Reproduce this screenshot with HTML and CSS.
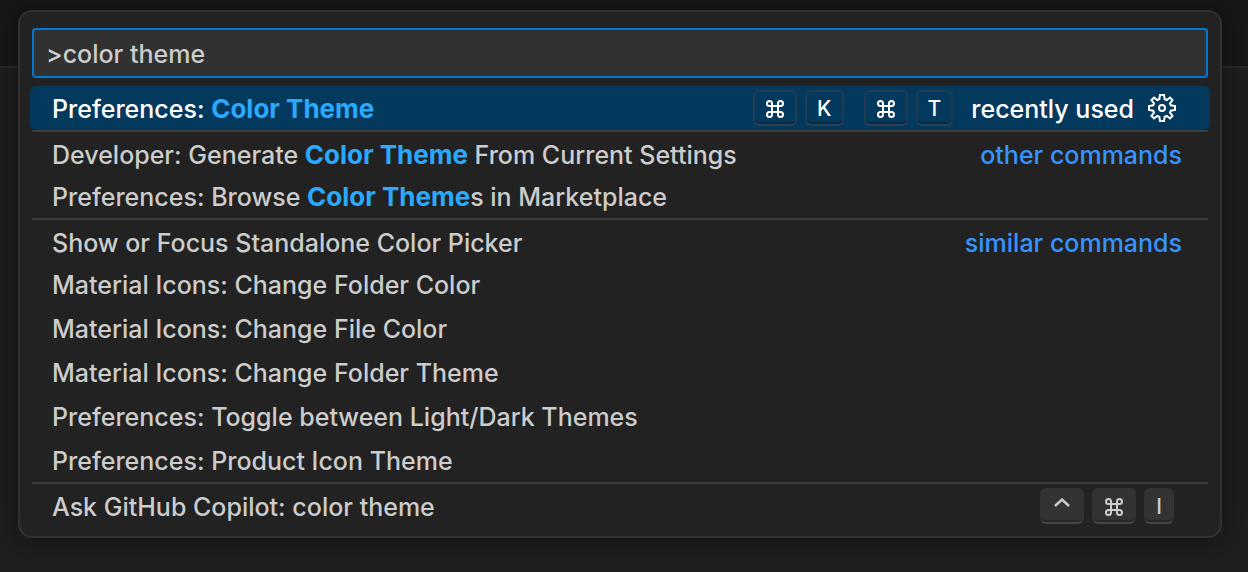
FILE: index.html
```html
<!DOCTYPE html>
<html lang="en">
<head>
<meta charset="utf-8">
<meta name="viewport" content="width=device-width, initial-scale=1">
<title>Command Palette</title>
<link rel="stylesheet" href="styles.css">
</head>
<body>
<svg class="defs" aria-hidden="true">
  <symbol id="cmd" viewBox="0 0 18 18">
    <path d="M6 6V3.500A2.500 2.500 0 1 0 3.500 6H14.500A2.500 2.500 0 1 0 12 3.500V14.500A2.500 2.500 0 1 0 14.500 12H3.500A2.500 2.500 0 1 0 6 14.500Z" fill="none" stroke="currentColor" stroke-width="2"/>
  </symbol>
</svg>
<main class="window">
  <div class="titlebar"></div>
  <section class="palette" aria-label="Command Palette">
    <input class="query" type="text" value="&gt;color theme" aria-label="Type the name of a command to run" spellcheck="false">
    <ul class="list">
      <li class="row selected">
        <button class="command" type="button">Preferences: <b>Color Theme</b></button>
        <span class="chords">
          <span class="keys"><kbd aria-label="Command"><svg class="glyph"><use href="#cmd"/></svg></kbd><kbd>K</kbd></span>
          <span class="keys"><kbd aria-label="Command"><svg class="glyph"><use href="#cmd"/></svg></kbd><kbd>T</kbd></span>
        </span>
        <span class="label">recently used</span>
        <button class="gear" type="button" aria-label="Configure Keybinding">
          <svg class="gear-icon" viewBox="0 0 28 28" fill="none" stroke="currentColor" stroke-width="2" stroke-linejoin="miter">
            <path d="M12 1H16L16.700 5.200L18.800 6L22 3.500L24.500 6L22 9.300L22.800 11.300L27 12V16L22.800 16.700L22 18.700L24.500 22L22 24.500L18.800 22L16.700 22.800L16 27H12L11.300 22.800L9.200 22L6 24.500L3.500 22L6 18.700L5.200 16.700L1 16V12L5.200 11.300L6 9.300L3.500 6L6 3.500L9.200 6L11.300 5.200Z"/>
            <circle cx="14" cy="14" r="3"/>
          </svg>
        </button>
      </li>
      <li class="row divided">
        <button class="command" type="button">Developer: Generate <b>Color Theme</b> From Current Settings</button>
        <span class="label">other commands</span>
      </li>
      <li class="row"><button class="command" type="button">Preferences: Browse <b>Color Theme</b>s in Marketplace</button></li>
      <li class="row divided">
        <button class="command" type="button">Show or Focus Standalone Color Picker</button>
        <span class="label">similar commands</span>
      </li>
      <li class="row"><button class="command" type="button">Material Icons: Change Folder Color</button></li>
      <li class="row"><button class="command" type="button">Material Icons: Change File Color</button></li>
      <li class="row"><button class="command" type="button">Material Icons: Change Folder Theme</button></li>
      <li class="row"><button class="command" type="button">Preferences: Toggle between Light/Dark Themes</button></li>
      <li class="row"><button class="command" type="button">Preferences: Product Icon Theme</button></li>
      <li class="row divided shortcut">
        <button class="command" type="button">Ask GitHub Copilot: color theme</button>
        <span class="keys">
          <kbd aria-label="Control"><svg class="glyph" viewBox="0 0 18 18"><path d="M2 8L9 1.500L16 8" fill="none" stroke="currentColor" stroke-width="2.400"/></svg></kbd>
          <kbd aria-label="Command"><svg class="glyph"><use href="#cmd"/></svg></kbd>
          <kbd>I</kbd>
        </span>
      </li>
    </ul>
  </section>
</main>
</body>
</html>
```
FILE: styles.css
```css
* {
  box-sizing: border-box;
}

body {
  margin: 0;
  background: #1f1f1f;
  color: #cccccc;
  font: 500 25px/42px Inter, "Liberation Sans", sans-serif;
}

.defs {
  position: absolute;
  width: 0;
  height: 0;
}

.window {
  display: grid;
  grid-template-rows: 68px auto;
  min-height: 100vh;
}

.titlebar {
  grid-area: 1 / 1;
  background: #181818;
  border-bottom: 2px solid #2b2b2b;
}

/* The palette floats over the title bar and the editor area. */
.palette {
  grid-area: 1 / 1 / 3 / 2;
  align-self: start;
  margin: 10px 26px 34px 18px;
  padding: 16px 10px 10px;
  background: #222222;
  border: 2px solid #313131;
  border-radius: 14px;
  box-shadow: 0 0 32px 4px rgba(0, 0, 0, 0.36);
}

.query {
  display: block;
  width: calc(100% - 4px);
  height: 50px;
  margin: 0 2px 8px;
  padding: 2px 12px 0;
  background: #313131;
  border: 2px solid #0078d4;
  border-radius: 4px;
  outline: none;
  color: #cccccc;
  font: inherit;
}

.list {
  margin: 0;
  padding: 0;
  list-style: none;
}

.row {
  display: flex;
  align-items: center;
  height: 44px;
  padding: 0 28px 0 22px;
  border-radius: 6px;
}

.divided {
  margin: 0 2px;
  padding: 2px 26px 0 20px;
  border-top: 2px solid #3c3c3c;
  border-radius: 0;
}

.selected {
  padding-right: 34px;
  background: #04395e;
  color: #ffffff;
}

.command {
  flex: 1;
  min-width: 0;
  padding: 2px 0 0;
  background: none;
  border: 0;
  color: inherit;
  font: inherit;
  text-align: left;
  white-space: nowrap;
}

.command b {
  color: #2aaaff;
  font-size: 26px;
  font-weight: 700;
  line-height: 1;
}

.label {
  padding-top: 2px;
  color: #3794ff;
  white-space: nowrap;
}

.selected .label {
  margin: 0 14px 0 18px;
  color: inherit;
}

.chords {
  display: flex;
  gap: 20px;
}

.keys {
  display: flex;
  gap: 8px;
}

.shortcut {
  padding-right: 34px;
}

kbd {
  display: flex;
  align-items: center;
  justify-content: center;
  min-width: 30px;
  height: 36px;
  padding: 2px 10px 0;
  background: #333333;
  border: 2px solid #333333;
  border-bottom-color: #444444;
  border-radius: 6px;
  box-shadow: inset 0 -2px 0 #292929;
  font: 500 21px/30px Inter, "Liberation Sans", sans-serif;
}

.selected kbd {
  background: transparent;
  border-color: #213b50;
  border-bottom-color: #2c4052;
  box-shadow: inset 0 -2px 0 #042c49;
}

.glyph {
  width: 20px;
  height: 18px;
}

.gear {
  display: flex;
  padding: 0;
  background: none;
  border: 0;
  color: inherit;
}

.gear-icon {
  width: 28px;
  height: 28px;
}
```
